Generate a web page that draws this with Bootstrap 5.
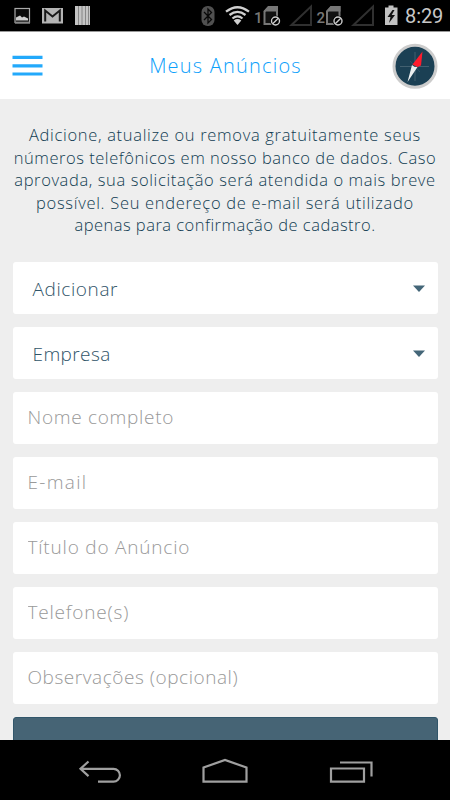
<!DOCTYPE html>
<html lang="pt-BR">
<head>
<meta charset="utf-8">
<meta name="viewport" content="width=device-width, initial-scale=1">
<title>Meus Anúncios</title>
<link href="https://cdn.jsdelivr.net/npm/bootstrap@5.3.0/dist/css/bootstrap.min.css" rel="stylesheet">
<style>
body{font-family:"Open Sans","Noto Sans",sans-serif;font-weight:300;background:#eee;color:#103c52}
.phone{width:450px;height:800px}
.statusbar{height:31px;background:#000}
.clock{font:400 20px/33px Roboto,sans-serif;color:#c8c8c8;letter-spacing:-.1px;width:45px}
.topbar{height:68px;border-top:1px solid #999;padding:0 12px}
.topbar h1{font-size:20px;font-weight:300;color:#0ba0fb;letter-spacing:1.2px;line-height:30px;margin-top:1px;padding-left:16px}
.bars{width:31px;height:22px}
.intro{padding-top:25px;height:163px;font-size:16.5px;line-height:22.5px}
.intro span{display:block;white-space:nowrap}
.l1{letter-spacing:.68px}.l2{letter-spacing:.53px}.l3{letter-spacing:.61px}.l4{letter-spacing:.69px}.l5{letter-spacing:.48px}
.fields{padding:0 12.5px;gap:13px}
.field{height:52px;flex:none;border:0;border-radius:3px;font-size:19px;letter-spacing:.8px;color:#2f5468;background:#fff;padding:0 15px 2px}
.field.pick{padding:2px 12px 0 20px}
.f1{letter-spacing:.6px}.f2{letter-spacing:.4px}.f3{letter-spacing:.7px}.f4{letter-spacing:1.3px}.f7{letter-spacing:.55px}
input.field::placeholder{color:#999;opacity:1}
input.field{font-weight:300}
.send{height:52px;flex:none;border:1px solid #31566a;border-radius:3px;background:#466475}
.navbtns{height:60px;background:#000}
</style>
<script src="https://cdn.jsdelivr.net/npm/bootstrap@5.3.0/dist/js/bootstrap.bundle.min.js"></script>
</head>
<body class="overflow-hidden">
<div class="phone d-flex flex-column overflow-hidden">
<div class="statusbar d-flex justify-content-between flex-shrink-0">
<svg width="100" height="31" aria-hidden="true">
<rect x="15" y="8.500" width="14.500" height="14" fill="#080808" stroke="#aaa" stroke-width="1.200"/><path d="M16 20.500v-3l2-1 2-1 2 2 2-1 4 2v2z" fill="#ccc"/><path d="M15 22.700h15" stroke="#888" stroke-width="2"/>
<rect x="42" y="8" width="21" height="15.500" fill="#b4b4b4"/><path d="M45.200 21.500V10.500l7.300 6 7.300-6v11" fill="none" stroke="#181818" stroke-width="2"/>
<rect x="75" y="6" width="15" height="19" fill="#c4c4c4"/><path d="M78.500 6v19M82 6v19M85.500 6v19M88.500 6v19" stroke="#777" stroke-width=".8"/>
</svg>
<div class="d-flex">
<svg width="215" height="31" viewBox="190 0 215 31" aria-hidden="true">
<rect x="201.500" y="6" width="13" height="20" rx="6" fill="#505050"/><path d="M204 12l7.500 7.500-3.500 3.500V9l3.500 3.500L204 20" fill="none" stroke="#080808" stroke-width="1.300"/>
<g fill="none" stroke="#d0d0d0" stroke-width="2.300"><path d="M226 11.700Q237.500 2.700 249 11.700"/><path d="M229.500 15Q237.500 8.700 245.500 15"/><path d="M232.500 18.500Q237.500 14.200 242.500 18.500"/></g><path d="M233.700 20.500q3.800-2.800 7.600 0l-3.800 4.500z" fill="#d0d0d0"/>
<text x="254" y="22.500" font-family="Roboto,sans-serif" font-weight="500" font-size="15" fill="#777">1</text>
<text x="316.500" y="22.500" font-family="Roboto,sans-serif" font-weight="500" font-size="15" fill="#777">2</text>
<g id="sim"><path d="M264.500 11.500l4-4.500h8.500v17h-12.500z" fill="#111" stroke="#777" stroke-width="2"/><path d="M263.500 11.500l5-5.500h9.500v5.500z" fill="#777"/><circle cx="275.500" cy="21" r="5.500" fill="#000"/><circle cx="275.500" cy="21" r="4" fill="none" stroke="#ccc" stroke-width="1.400"/><path d="M272.700 23.800l5.600-5.600" stroke="#ccc" stroke-width="1.400"/></g>
<use href="#sim" x="62.500"/>
<path d="M291.500 25L311 6.500V25zM353.500 25L373 6.500V25z" fill="none" stroke="#303030" stroke-width="2"/>
<path d="M385 7.500h3.500v-2h5v2h4V25H385z" fill="#c2c2c2"/><path d="M392.500 10l-5 7h3l-1.500 6 6-8h-3.300l2.800-5z" fill="#111"/>
</svg>
<span class="clock">8:29</span>
</div>
</div>
<header class="topbar bg-white d-flex align-items-center justify-content-between flex-shrink-0">
<svg class="bars" viewBox="0 0 31 22" aria-hidden="true"><path d="M.5 2.300h30M.5 10.800h30M.5 19h30" stroke="#23a9fb" stroke-width="3.200"/></svg>
<h1 class="mb-0">Meus Anúncios</h1>
<svg width="46" height="46" viewBox="392 42 46 46" aria-hidden="true"><circle cx="415" cy="65.300" r="21" fill="#1b4054" stroke="#ccc" stroke-width="3"/><path d="M400 65.500h29M415 51v29" stroke="#4c6877" stroke-width=".8"/><path d="M410 60l10 11M420 60l-10 11" stroke="#34566a" stroke-width=".8"/><path d="M422.500 50.500l-1.500 14-3.500 1.500-5-2.500z" fill="#ff1b2d"/><path d="M407.500 81l4.500-17 2.500 2 3 0z" fill="#eceff0"/></svg>
</header>
<main class="flex-grow-1 overflow-hidden">
<p class="intro mb-0 text-center"><span class="l1">Adicione, atualize ou remova gratuitamente seus</span> <span class="l2">números telefônicos em nosso banco de dados. Caso</span> <span class="l3">aprovada, sua solicitação será atendida o mais breve</span> <span class="l4">possível. Seu endereço de e-mail será utilizado</span> <span class="l5">apenas para confirmação de cadastro.</span></p>
<form class="fields d-flex flex-column">
<div class="field pick d-flex align-items-center justify-content-between" role="button"><span class="f1">Adicionar</span><svg width="14" height="8" aria-hidden="true"><path d="M1 .5h12L7 7z" fill="#446678"/></svg></div>
<div class="field pick d-flex align-items-center justify-content-between" role="button"><span class="f2">Empresa</span><svg width="14" height="8" aria-hidden="true"><path d="M1 .5h12L7 7z" fill="#446678"/></svg></div>
<input class="field f3" placeholder="Nome completo" aria-label="Nome completo">
<input class="field f4" placeholder="E-mail" aria-label="E-mail">
<input class="field f5" placeholder="Título do Anúncio" aria-label="Título do Anúncio">
<input class="field f6" placeholder="Telefone(s)" aria-label="Telefone(s)">
<input class="field f7" placeholder="Observações (opcional)" aria-label="Observações (opcional)">
<button type="submit" class="send" aria-label="Enviar"></button>
</form>
</main>
<nav class="navbtns flex-shrink-0">
<svg width="450" height="60" fill="none" stroke="#a0a0a0" stroke-width="2.200" aria-hidden="true"><path d="M88.500 21.500l-8 7.300 8 7.300M81 28.800h32.500a6.400 6.400 0 0 1 0 12.800H98"/><path d="M203.500 41.700V27.500L225 20l21.500 7.500v14.200z"/><path d="M331 28.500h33v13.200h-33zM340 22.500h31.500V36.500"/></svg>
</nav>
</div>
</body>
</html>
